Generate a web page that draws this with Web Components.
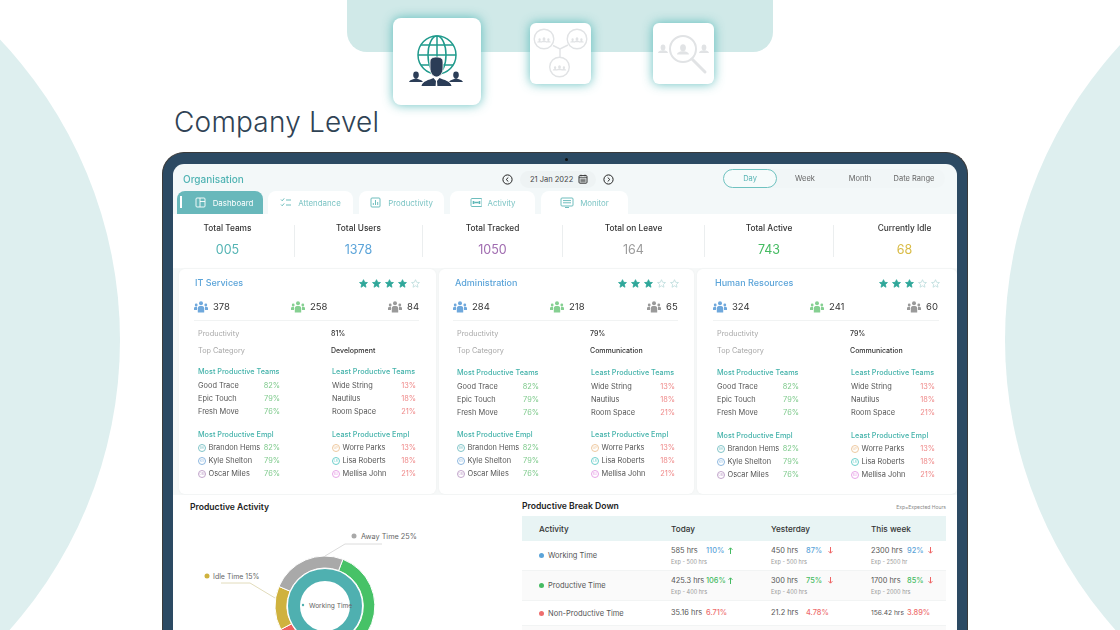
<!DOCTYPE html>
<html lang="en">
<head>
<meta charset="UTF-8" />
<title>Company Level</title>
<style>
  html, body { margin: 0; width: 1120px; height: 630px; overflow: hidden; background: #fff; }
  body { font-family: Inter, "Noto Sans", "Liberation Sans", sans-serif; color: #333; }
</style>
</head>
<body>
<promo-page>
  <tile-row slot="tiles">
    <promo-tile big kind="globe"></promo-tile>
    <promo-tile kind="network" style="margin-left:49px"></promo-tile>
    <promo-tile kind="search" style="margin-left:62px"></promo-tile>
  </tile-row>
  <span slot="heading">Company Level</span>
  <device-frame slot="device">
    <dash-header></dash-header>
    <dash-tabs></dash-tabs>
    <stat-strip></stat-strip>
    <card-row>
      <team-card name="IT Services" stars="4" users="378,258,84" prod="81%" cat="Development"
        pad="19" right="20" tpad="16" width="257"></team-card>
      <team-card name="Administration" stars="3" users="284,218,65" prod="79%" cat="Communication"
        pad="18" right="19" tpad="16" width="255" teams-shift="1"></team-card>
      <team-card name="Human Resources" stars="3" users="324,241,60" prod="79%" cat="Communication"
        pad="20" right="21" tpad="18" width="260" teams-shift="1" empl-shift="1"></team-card>
    </card-row>
    <bottom-panel>
      <activity-donut></activity-donut>
      <break-down></break-down>
    </bottom-panel>
  </device-frame>
</promo-page>

<script>
  const base = `<style>* { margin: 0; padding: 0; box-sizing: border-box; } :host { box-sizing: border-box; }</style>`;

  // promo page shell
  class PromoPage extends HTMLElement {
    constructor() {
      super();
      this.attachShadow({ mode: "open" }).innerHTML = base + `
        <style>
          :host { display: block; position: relative; width: 1120px; height: 630px; overflow: hidden; background: #fff; }
          .blob { position: absolute; width: 872px; height: 872px; border-radius: 50%; background: #deefef; top: -96px; }
          .left { left: -752px; }
          .right { left: 1005px; }
          .tab { position: absolute; left: 347px; top: 0; width: 426px; height: 52px; background: #d0e9e8; border-radius: 0 0 20px 20px; }
          .flow { position: relative; display: flex; flex-direction: column; }
          h1 { font: 300 28px/34px Inter, sans-serif; color: #2f4254; padding-left: 174px; letter-spacing: .2px; }
          .dev { display: block; padding: 13px 0 0 162px; }
        </style>
        <div class="blob left"></div>
        <div class="blob right"></div>
        <div class="tab"></div>
        <div class="flow">
          <slot name="tiles"></slot>
          <h1><slot name="heading"></slot></h1>
          <div class="dev"><slot name="device"></slot></div>
        </div>`;
    }
  }
  customElements.define("promo-page", PromoPage);

  class TileRow extends HTMLElement {
    constructor() {
      super();
      this.attachShadow({ mode: "open" }).innerHTML = base + `
        <style>:host { display: flex; align-items: flex-start; padding: 18px 0 0 393px; height: 105px; }</style>
        <slot></slot>`;
    }
  }
  customElements.define("tile-row", TileRow);

  const person = (x, y, s, c) => `<g transform="translate(${x} ${y}) scale(${s})" fill="${c}">
    <ellipse cx="0" cy="-5" rx="3.4" ry="4.2"/><path d="M-7 3 C-7 0 -3 -0.5 -1.6 -1 L1.6 -1 C3 -.5 7 0 7 3Z"/></g>`;
  const crew = (x, y) => `<g>
    <circle cx="${x}" cy="${y}" r="9.8" fill="none" stroke="#e1e3e5" stroke-width="1.4"/>
    ${person(x, y + 2, .42, "#e1e3e5")}${person(x - 4.4, y + 2.4, .34, "#e1e3e5")}${person(x + 4.4, y + 2.4, .34, "#e1e3e5")}</g>`;
  const tileIcons = {
    globe: `<svg width="88" height="87" viewBox="0 0 88 87">
      <g fill="none" stroke="#1f9a8c" stroke-width="1.5">
        <circle cx="44" cy="37" r="19"/>
        <ellipse cx="44" cy="37" rx="9" ry="19"/>
        <path d="M44 18V56M28 27H60M25 37H63M28 47H60"/>
      </g>
      <path d="M37 44 C37 40 40 39 43.5 39 C47 39 50 40 50 44 L50 50 C50 55 47 59 43.5 59 C40 59 37 55 37 50Z" fill="#2b3d57" stroke="#fff" stroke-width=".8"/>
      <path d="M28.5 68 C29.5 63 36 62 40.5 60 L43 63 L42.6 68Z M58.5 68 C57.5 63 51 62 46.5 60 L44 63 L44.4 68Z" fill="#2b3d57"/>
      <g fill="#2b3d57">
        <ellipse cx="23" cy="57" rx="2.8" ry="3.4"/><path d="M16 64 C17 61.5 20.5 61.5 23 60 C25.5 61.5 28.5 61.5 30 64Z"/>
        <ellipse cx="63" cy="57" rx="2.8" ry="3.4"/><path d="M56 64 C57.5 61.5 60.5 61.5 63 60 C65.5 61.5 69 61.5 70 64Z"/>
      </g></svg>`,
    network: `<svg width="61" height="61" viewBox="0 0 61 61">
      ${crew(14, 16)}${crew(47, 16)}${crew(29.5, 44)}
      <path d="M23 22.5 L30 26 L38 22 M30 26 V34" fill="none" stroke="#e1e3e5" stroke-width="1.4"/></svg>`,
    search: `<svg width="61" height="61" viewBox="0 0 61 61">
      <circle cx="30" cy="26" r="13" fill="none" stroke="#e1e3e5" stroke-width="2"/>
      <path d="M39 36 L52 49" stroke="#e1e3e5" stroke-width="3" stroke-linecap="round"/>
      ${person(30, 29, .85, "#e1e3e5")}${person(10, 28, .7, "#e1e3e5")}${person(51, 28, .7, "#e1e3e5")}</svg>`
  };
  class PromoTile extends HTMLElement {
    constructor() {
      super();
      this.attachShadow({ mode: "open" }).innerHTML = base + `
        <style>
          :host { display: flex; flex: none; align-items: center; justify-content: center; width: 61px; height: 61px; margin-top: 5px; background: #fff; border-radius: 6px; box-shadow: 0 0 11px rgba(60,175,175,.8); overflow: hidden; }
          :host([big]) { width: 88px; height: 87px; margin-top: 0; border-radius: 8px; }
          svg { display: block; }
        </style>
        ${tileIcons[this.getAttribute("kind")]}`;
    }
  }
  customElements.define("promo-tile", PromoTile);

  // laptop frame
  class DeviceFrame extends HTMLElement {
    constructor() {
      super();
      this.attachShadow({ mode: "open" }).innerHTML = base + `
        <style>
          :host { display: block; position: relative; width: 806px; height: 520px; padding: 11px 10px 0; background: #2c4a63; border: 1.5px solid #3a3a3a; border-bottom: 0; border-radius: 22px 22px 0 0; }
          .cam { position: absolute; left: 402px; top: 5px; width: 3px; height: 3px; border-radius: 50%; background: #111; }
          .screen { background: #f3f8f9; border-radius: 11px 11px 0 0; overflow: hidden; height: 100%; filter: blur(.3px); }
        </style>
        <div class="cam"></div>
        <div class="screen"><slot></slot></div>`;
    }
  }
  customElements.define("device-frame", DeviceFrame);

  class DashHeader extends HTMLElement {
    constructor() {
      super();
      const arrow = d => `<svg width="11" height="11" viewBox="0 0 11 11" fill="none" stroke="#222"><circle cx="5.5" cy="5.5" r="4.6"/><path d="${d}"/></svg>`;
      this.attachShadow({ mode: "open" }).innerHTML = base + `
        <style>
          :host { display: grid; grid-template-columns: 319px 221px 222px; align-items: center; height: 27px; padding: 3px 0 0 10px; }
          .org { font: 500 10px Inter, sans-serif; color: #4fb3b3; }
          .date { display: flex; align-items: center; gap: 7px; }
          .pill { display: flex; align-items: center; justify-content: space-between; height: 17px; width: 76px; padding: 0 8px 0 10px; border-radius: 9px; background: #eef3f4; font: 400 7.5px Inter, sans-serif; color: #444; white-space: nowrap; }
          .range { display: flex; align-items: center; width: 222px; height: 19px; margin-top: -1px; background: #f1f6f7; border-radius: 10px; font: 400 7.5px Inter, sans-serif; color: #666; }
          .on { width: 54px; height: 19px; line-height: 17px; text-align: center; color: #59b5b5; border: 1px solid #6fc2c0; border-radius: 10px; background: #f6fbfb; }
          .w { width: 56px; text-align: center; }
          .m { width: 54px; text-align: center; }
          .d { width: 54px; text-align: center; white-space: nowrap; }
          svg { display: block; flex: none; }
        </style>
        <div class="org">Organisation</div>
        <div class="date">
          ${arrow("M6.3 3.5 L4.2 5.5 L6.3 7.5")}
          <div class="pill">21 Jan 2022
            <svg width="10" height="10" viewBox="0 0 10 10" fill="none" stroke="#333"><rect x="1" y="1.6" width="8" height="7.6" rx="1"/><path d="M1 3.6H9M3 .6V2.4M7 .6V2.4M2.4 5.2H7.6M2.4 6.4H7.6M2.4 7.7H7.6" stroke-width=".7"/></svg>
          </div>
          ${arrow("M4.7 3.5 L6.8 5.5 L4.7 7.5")}
        </div>
        <div class="range"><div class="on">Day</div><div class="w">Week</div><div class="m">Month</div><div class="d">Date Range</div></div>`;
    }
  }
  customElements.define("dash-header", DashHeader);

  const tabGlyphs = {
    Dashboard: `<rect x="1" y="1" width="9" height="9" rx="1"/><path d="M5 1V10M5 4.5H10"/>`,
    Attendance: `<path d="M1 2.5L2.2 3.8L4.2 1.4M1 7.5L2.2 8.8L4.2 6.4M6 3H11M6 8H11"/>`,
    Productivity: `<rect x="1" y="1" width="9" height="9" rx="1"/><path d="M3.3 8V6M5.5 8V3M7.7 8V5"/>`,
    Activity: `<rect x="1" y="1.5" width="11" height="8" rx="1"/><path d="M3.5 4V7M9.5 4V7M4.5 5.5H8.5" stroke-width="1.6"/>`,
    Monitor: `<rect x="1" y="1" width="12" height="8" rx="1"/><path d="M3 3.6H11M3 5.8H11M5 10.5H9"/>`
  };
  class DashTabs extends HTMLElement {
    constructor() {
      super();
      const tabs = [["Dashboard", 86, 5], ["Attendance", 85, 5], ["Productivity", 85, 6], ["Activity", 85, 6], ["Monitor", 87, 6]];
      this.attachShadow({ mode: "open" }).innerHTML = base + `
        <style>
          :host { display: flex; height: 23px; padding-left: 4px; }
          .tab { display: flex; align-items: center; justify-content: center; gap: 6px; height: 23px; background: #fff; color: #7cc4c4; border-radius: 8px 8px 0 0; font: 400 7.9px Inter, sans-serif; position: relative; white-space: nowrap; }
          .tab.on { background: #68b8bb; color: #fff; padding-left: 8px; }
          .tab.on::before { content: ""; position: absolute; left: 3px; top: 5px; width: 2px; height: 12px; background: #fff; }
          svg { fill: none; stroke: #5db6b6; stroke-width: .9; display: block; }
          .on svg { stroke: #fff; }
        </style>
        ${tabs.map((t, i) => `<div class="tab ${i ? "" : "on"}" style="width:${t[1]}px;${i ? `margin-left:${t[2]}px` : ""}"><svg width="${t[0]=="Monitor"?14:12}" height="11" viewBox="0 0 ${t[0]=="Monitor"?14:12} 11">${tabGlyphs[t[0]]}</svg>${t[0]}</div>`).join("")}`;
    }
  }
  customElements.define("dash-tabs", DashTabs);

  class StatStrip extends HTMLElement {
    constructor() {
      super();
      const stats = [
        ["Total Teams", "005", "#54b4b4", 122, "padding-right:12px"],
        ["Total Users", "1378", "#5ba4d9", 128, ""],
        ["Total Tracked", "1050", "#a06cb0", 140, ""],
        ["Total on Leave", "164", "#9c9c9c", 142, ""],
        ["Total Active", "743", "#45bb62", 129, ""],
        ["Currently Idle", "68", "#d9bb45", 123, "padding-left:18px"]
      ];
      this.attachShadow({ mode: "open" }).innerHTML = base + `
        <style>
          :host { display: grid; grid-template-columns: ${stats.map(s => s[3] + "px").join(" ")}; height: 54px; padding-top: 11px; background: #fff; }
          .c { height: 32px; text-align: center; border-right: 1px solid #ebeeef; white-space: nowrap; }
          .c:last-child { border: 0; }
          .l { font: 500 8.3px/11px Inter, sans-serif; color: #333; margin-top: -2px; }
          .v { font: 400 12.5px/16px Inter, sans-serif; margin-top: 8px; }
        </style>
        ${stats.map(s => `<div class="c" style="${s[4]}"><div class="l">${s[0]}</div><div class="v" style="color:${s[2]}">${s[1]}</div></div>`).join("")}`;
    }
  }
  customElements.define("stat-strip", StatStrip);

  class CardRow extends HTMLElement {
    constructor() {
      super();
      this.attachShadow({ mode: "open" }).innerHTML = base + `
        <style>:host { display: flex; gap: 3px; height: 227px; padding: 1px 0 1px 6px; background: #f6f8f8; }</style>
        <slot></slot>`;
    }
  }
  customElements.define("card-row", CardRow);

  const group = c => `<svg width="14" height="12" viewBox="0 0 14 12" fill="${c}">
    <circle cx="7" cy="2.2" r="2"/><circle cx="2.2" cy="4" r="1.4"/><circle cx="11.8" cy="4" r="1.4"/>
    <path d="M3.8 11.5V7.3C3.8 5.6 5 5 7 5C9 5 10.2 5.6 10.2 7.3V11.5Z"/>
    <path d="M0 9V7.2C0 6.1 1 5.8 3 5.8V9ZM14 9V7.2C14 6.1 13 5.8 11 5.8V9Z"/></svg>`;
  const star = on => `<svg width="9" height="9" viewBox="0 0 20 20" fill="${on ? "#2fa79a" : "none"}" stroke="${on ? "#2fa79a" : "#bcdcdc"}" stroke-width="1.8"><path d="M10 1.5 L12.6 7.3 L18.8 7.9 L14.1 12.1 L15.5 18.3 L10 15.1 L4.5 18.3 L5.9 12.1 L1.2 7.9 L7.4 7.3Z"/></svg>`;
  const teamsGood = [["Good Trace", "82%"], ["Epic Touch", "79%"], ["Fresh Move", "76%"]];
  const teamsBad = [["Wide String", "13%"], ["Nautilus", "18%"], ["Room Space", "21%"]];
  const emplGood = [["Brandon Hems", "82%", "BH", "#7fc4c8"], ["Kyle Shelton", "79%", "KS", "#8db8e0"], ["Oscar Miles", "76%", "OM", "#c3a6cc"]];
  const emplBad = [["Worre Parks", "13%", "WP", "#eec9a0"], ["Lisa Roberts", "18%", "LR", "#6fd0cc"], ["Mellisa John", "21%", "MJ", "#e8a6e8"]];

  class TeamCard extends HTMLElement {
    constructor() {
      super();
      const a = n => this.getAttribute(n);
      const pad = +a("pad"), right = +a("right"), tshift = +(a("teams-shift") || 0), eshift = +(a("empl-shift") || 0);
      const users = a("users").split(","), stars = +a("stars");
      const colors = ["#6fa8dc", "#86d092", "#9a9a9a"];
      const list = (title, rows, cls, mt) => `<div class="list" style="margin-top:${mt}px">
        <div class="lt ${rows[0][2] ? "tight" : ""}">${title}</div>
        ${rows.map(r => `<div class="r">${r[2] ? `<i style="border-color:${r[3]};color:${r[3]}">${r[2]}</i>` : ""}<span>${r[0]}</span><b class="${cls}">${r[1]}</b></div>`).join("")}</div>`;
      this.attachShadow({ mode: "open" }).innerHTML = base + `
        <style>
          :host { display: block; flex: none; width: ${a("width")}px; height: 225px; background: #fff; border-radius: 6px; box-shadow: 0 0 3px rgba(0,0,0,.04); padding: 8px ${right}px 0 ${pad}px; font-family: Inter, sans-serif; }
          .head { display: flex; justify-content: space-between; align-items: center; height: 12px; margin-left: ${a("tpad") - pad}px; margin-right: -4px; }
          h2 { font: 500 9px/12px Inter, sans-serif; color: #5ba4d9; }
          .stars { display: flex; gap: 4px; }
          .users { display: grid; grid-template-columns: 97px 97px 1fr; height: 21px; padding-top: 1px; margin: 11px -3px 0 -4px; border-bottom: 1px solid #f1f3f3; }
          .u { display: flex; align-items: flex-start; gap: 5px; font: 400 9.5px/12px Inter, sans-serif; color: #333; }
          .u svg { display: block; }
          .info { display: grid; grid-template-columns: 133px 1fr; margin-top: 7px; row-gap: 5px; font: 400 7.3px/12px Inter, sans-serif; color: #a8a8a8; }
          .info b { color: #333; font-weight: 500; font-size: 7px; }
          .lists { display: grid; grid-template-columns: 82px 84px; column-gap: 52px; }
          .list { font: 400 7.4px/13.3px Inter, sans-serif; color: #555; }
          .lt { font-weight: 500; color: #45b3ab; font-size: 7.25px; line-height: 12px; margin-bottom: .5px; white-space: nowrap; }
          .lt.tight { margin-bottom: -.5px; }
          .r { display: flex; align-items: center; white-space: nowrap; }
          .r span { flex: 1; }
          .r b { font-weight: 400; }
          .g { color: #7cc98a; }
          .x { color: #ef8a8a; }
          i { flex: none; display: block; width: 8px; height: 8px; margin-right: 2.5px; border: 1px solid; border-radius: 50%; font: normal 3px/6px Inter, sans-serif; text-align: center; overflow: hidden; }
        </style>
        <div class="head"><h2>${a("name")}</h2><div class="stars">${[1,2,3,4,5].map(i => star(i <= stars)).join("")}</div></div>
        <div class="users">${users.map((u, i) => `<div class="u">${group(colors[i])}${u}</div>`).join("")}</div>
        <div class="info"><span>Productivity</span><b>${a("prod")}</b><span>Top Category</span><b>${a("cat")}</b></div>
        <div class="lists">
          ${list("Most Productive Teams", teamsGood, "g", 9 + tshift)}
          ${list("Least Productive Teams", teamsBad, "x", 9 + tshift)}
          ${list("Most Productive Empl", emplGood, "g", 11 - tshift + eshift)}
          ${list("Least Productive Empl", emplBad, "x", 11 - tshift + eshift)}
        </div>`;
    }
  }
  customElements.define("team-card", TeamCard);

  class BottomPanel extends HTMLElement {
    constructor() {
      super();
      this.attachShadow({ mode: "open" }).innerHTML = base + `
        <style>:host { display: grid; grid-template-columns: 343px 1fr; height: 135px; background: #fff; overflow: hidden; }</style>
        <slot></slot>`;
    }
  }
  customElements.define("bottom-panel", BottomPanel);

  // arc helper, angles clockwise from 12 o'clock
  const arc = (cx, cy, ro, ri, a0, a1) => {
    const p = (r, d) => { const t = (d - 90) * Math.PI / 180; return (cx + r * Math.cos(t)).toFixed(2) + " " + (cy + r * Math.sin(t)).toFixed(2); };
    const big = a1 - a0 > 180 ? 1 : 0;
    return `M${p(ro, a0)} A${ro} ${ro} 0 ${big} 1 ${p(ro, a1)} L${p(ri, a1)} A${ri} ${ri} 0 ${big} 0 ${p(ri, a0)}Z`;
  };
  class ActivityDonut extends HTMLElement {
    constructor() {
      super();
      const seg = [[21, 200, "#47c267"], [200, 242, "#ee5f5f"], [242, 293, "#cfb23e"], [293, 381, "#a9a9a9"]];
      this.attachShadow({ mode: "open" }).innerHTML = base + `
        <style>
          :host { display: block; background: #fff; }
          h3 { font: 600 8.6px/11px Inter, sans-serif; color: #222; padding: 7px 0 0 17px; height: 25px; }
          svg { display: block; }
          text { font: 400 7.3px Inter, sans-serif; fill: #666; }
        </style>
        <h3>Productive Activity</h3>
        <svg width="343" height="110" viewBox="0 0 343 110">
          ${seg.map(s => `<path d="${arc(152, 86, 50, 38, s[0], s[1])}" fill="${s[2]}" stroke="#fff" stroke-width="1"/>`).join("")}
          <circle cx="152" cy="86" r="31" fill="none" stroke="#4fb0b0" stroke-width="12"/>
          <path d="M152 36 L172 24 H209" fill="none" stroke="#dcdcdc"/>
          <path d="M48 63 H77 L102 78" fill="none" stroke="#e2dcbc"/>
          <circle cx="181" cy="16" r="2.5" fill="#a9a9a9"/>
          <text x="188" y="19">Away Time  25%</text>
          <circle cx="34" cy="56" r="2.5" fill="#cfb23e"/>
          <text x="40" y="59" style="font-size:7px">Idle Time 15%</text>
          <circle cx="130" cy="85" r="1.2" fill="#4fb0b0"/>
          <text x="136" y="88" style="font-size:6.6px">Working Time</text>
        </svg>`;
    }
  }
  customElements.define("activity-donut", ActivityDonut);

  class BreakDown extends HTMLElement {
    constructor() {
      super();
      const up = `<svg width="5" height="7" viewBox="0 0 5 7" fill="none" stroke="#45bb62"><path d="M2.5 7V1M.6 2.8L2.5 .8L4.4 2.8"/></svg>`;
      const dn = `<svg width="5" height="7" viewBox="0 0 5 7" fill="none" stroke="#ee6464"><path d="M2.5 0V6M.6 4.2L2.5 6.2L4.4 4.2"/></svg>`;
      const B = "#5ba4d9", G = "#45bb62", R = "#ee6e6e";
      const rows = [
        ["Working Time", "#5ba4d9", 30, [["585 hrs", "110%", B, up, "Exp - 500 hrs"], ["450 hrs", "87%", B, dn, "Exp - 500 hrs"], ["2300 hrs", "92%", B, dn, "Exp - 2500 hr"]]],
        ["Productive Time", "#45bb62", 30, [["425.3 hrs", "106%", G, up, "Exp - 400 hrs"], ["300 hrs", "75%", G, dn, "Exp - 400 hrs"], ["1700 hrs", "85%", G, dn, "Exp - 2000 hrs"]]],
        ["Non-Productive Time", "#ee6e6e", 25, [["35.16 hrs", "6.71%", R, "", ""], ["21.2 hrs", "4.78%", R, "", ""], ["156.42 hrs", "3.89%", R, "", ""]]]
      ];
      this.attachShadow({ mode: "open" }).innerHTML = base + `
        <style>
          :host { display: block; padding: 0 11px 0 6px; background: #fff; font-family: Inter, sans-serif; }
          .top { display: flex; justify-content: space-between; align-items: center; height: 21px; padding-top: 2px; }
          h3 { font: 600 8.6px/11px Inter, sans-serif; color: #222; }
          small { font: 400 5px Inter, sans-serif; color: #888; }
          .row { display: grid; grid-template-columns: 149px 100px 100px 75px; align-items: center; border-bottom: 1px solid #f2f4f4; }
          .hd { height: 25px; background: #e8f4f4; font: 500 8.2px Inter, sans-serif; color: #333; border: 0; }
          .hd div:first-child { padding-left: 17px; }
          .name { display: flex; align-items: center; gap: 4px; padding-left: 17px; font: 400 7.5px Inter, sans-serif; color: #555; white-space: nowrap; }
          .name em { width: 5px; height: 5px; border-radius: 50%; }
          .cell { font: 400 7.4px/10px Inter, sans-serif; color: #555; white-space: nowrap; }
          .line { display: grid; grid-template-columns: 35px 22px 5px; align-items: center; }
          .cell:last-child .line { grid-template-columns: 36px 21px 5px; }
          .line .long { font-size: 6.7px; }
          .line b { font-weight: 500; }
          .line svg { display: block; }
          .exp { font: 400 5.6px/8px Inter, sans-serif; color: #999; margin-top: 2px; }
          .foot { height: 30px; background: #fafafa; }
        </style>
        <div class="top"><h3>Productive Break Down</h3><small>Exp=Expected Hours</small></div>
        <div class="row hd"><div>Activity</div><div>Today</div><div>Yesterday</div><div>This week</div></div>
        ${rows.map((r, ri) => `<div class="row" style="height:${r[2]}px;background:${ri == 1 ? "#fafafa" : "#fff"}">
          <div class="name"><em style="background:${r[1]}"></em>${r[0]}</div>
          ${r[3].map(c => `<div class="cell"><div class="line"><span class="${c[0].length > 9 ? "long" : ""}">${c[0]}</span><b style="color:${c[2]}">${c[1]}</b>${c[3]}</div>${c[4] ? `<div class="exp">${c[4]}</div>` : ""}</div>`).join("")}
        </div>`).join("")}
        <div class="foot"></div>`;
    }
  }
  customElements.define("break-down", BreakDown);
</script>
</body>
</html>
